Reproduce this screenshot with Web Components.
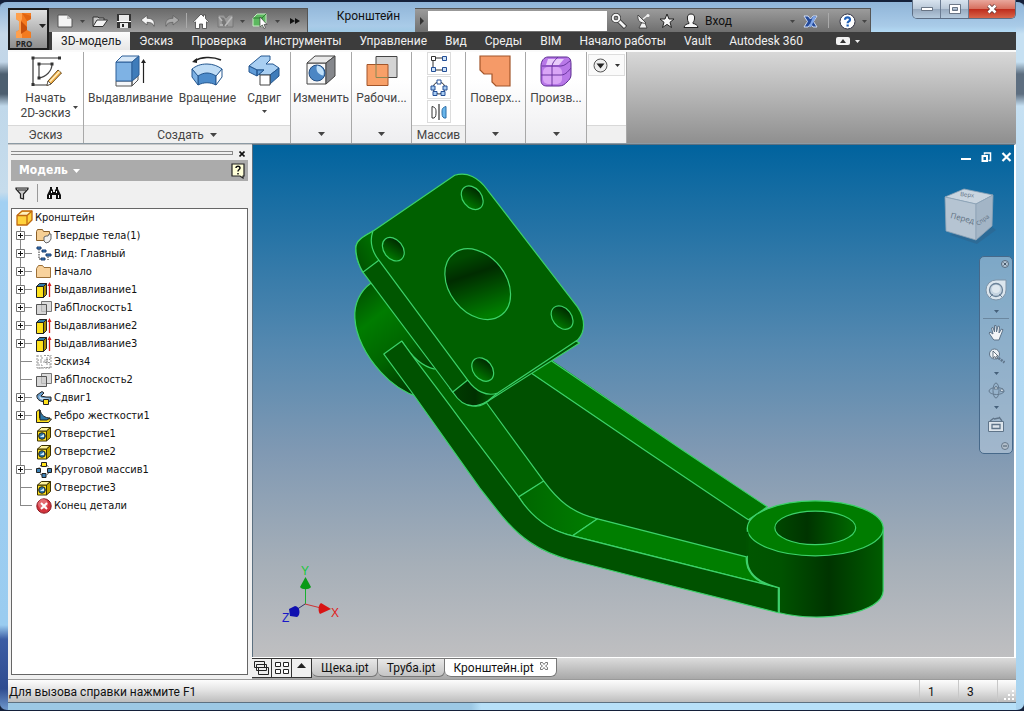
<!DOCTYPE html>
<html lang="ru">
<head>
<meta charset="utf-8">
<title>Кронштейн</title>
<style>
html,body{height:100%;margin:0}
body{font:12px/16px Roboto,"Noto Sans",sans-serif;color:#222;background:#14203a;overflow:hidden}
</style>
</head>
<body>
<cad-app></cad-app>
<script>
const define = (name, css, html, setup) => {
  const tpl = document.createElement('template');
  tpl.innerHTML = `<style>*{box-sizing:border-box}button{font:inherit;color:inherit;border:0;background:none;padding:0;margin:0}${css}</style>${html}`;
  customElements.define(name, class extends HTMLElement {
    connectedCallback() {
      if (this.shadowRoot) return;
      const root = this.attachShadow({mode: 'open'});
      root.append(tpl.content.cloneNode(true));
      if (setup) setup(this, root);
    }
  });
};

/* Icon set: [width, height, svg body] */
const cube = (f, t, s) => `<path fill="${f}" d="M1.500 5h9v10h-9z"/><path fill="${t}" d="M1.500 5l4-3.500h9l-4 3.500z"/><path fill="${s}" d="M10.500 5l4-3.500v10l-4 3.500z"/>`;
const I = {
  logo: [22, 27, `<path fill="#f47b20" d="M3 1h15v6l-4 2v9l4 2v6H3v-6l3-2V9L3 7z"/><path fill="#ffa04d" d="M3 1h6v6l-1 2v9l1 2v6H3v-6l3-2V9L3 7z"/><path fill="#c8500c" d="M8 9l6 6v3l-6 4z"/><path fill="#e06412" d="M9 1l9 3v3l-4 2z"/>`],
  caret: [7, 4, `<path fill="currentColor" d="M0 0h7L3.500 4z"/>`],
  caretS: [5, 3, `<path fill="currentColor" d="M0 0h5L2.500 3z"/>`],
  play: [4, 8, `<path fill="#333" d="M0 0v8l4-4z"/>`],
  ff: [10, 6, `<path fill="#111" d="M0 0l5 3-5 3zM5 0l5 3-5 3z"/>`],
  new: [16, 14, `<path fill="#f4f4f4" stroke="#555" d="M1 1h9l5 4v8H1z"/><path fill="#bbb" d="M10 1v4h5z"/>`],
  open: [16, 13, `<path fill="#c9c9c9" stroke="#333" d="M1 11V2h5l1 1h5v2"/><path fill="#f3f3f3" stroke="#333" d="M1 11.500L5 5h10.500L11 11.500z"/>`],
  save: [16, 16, `<path fill="#333" d="M1 1h14v14H1z"/><path fill="#e9e9e9" d="M3 2h10v6H3zM4 10h8v5H4z"/><path fill="#fff" d="M1 8h14v1H1z"/><path fill="#222" d="M6 11h2v3H6z"/>`],
  undo: [16, 12, `<path fill="#f5f5f5" stroke="#444" stroke-width=".6" d="M1 5l6-4.500v2.800c6 0 8 3 7 8-1-3-3-4-7-4v2.700z"/>`],
  redo: [16, 12, `<path fill="#aaa" stroke="#555" stroke-width=".6" d="M15 5L9 .5v2.800c-6 0-8 3-7 8 1-3 3-4 7-4v2.700z"/>`],
  home: [16, 16, `<path fill="#fff" stroke="#444" stroke-width=".8" d="M.8 8.500L8 1l2.500 2.500V2h2v3.500l2.800 3-1 1-.8-.7v6.700H9.500V11h-3v4.500h-4V8.800l-.7.700z"/>`],
  mat: [17, 14, `<path fill="#999" stroke="#777" d="M1 1h6l2 3 3-3h4v12H1z"/><path fill="#777" d="M3 3l4 1 4 8H6z"/><path fill="none" stroke="#bbb" stroke-width="1.500" d="M2 3l3 4M15 3L8 12M3 11h3"/>`],
  pick: [17, 16, `<path fill="#5cb85f" stroke="#c9f0c6" d="M1 5l4-4h9v9l-3 3H1z"/><path fill="none" stroke="#2f7d33" d="M1 5h9v8M10 5l4-4"/><path fill="#fff" stroke="#444" stroke-width=".7" d="M8 4v10l2.300-2 1.700 3.500 1.500-.7L12 11.500h3z"/>`],
  key: [16, 16, `<path fill="none" stroke="#333" stroke-width="4.500" d="M6 6l8.500 8.500"/><path fill="none" stroke="#f4f4f4" stroke-width="2.800" d="M6 6l8 8"/><circle cx="5" cy="5" r="3.300" fill="none" stroke="#333" stroke-width="3.400"/><circle cx="5" cy="5" r="3.300" fill="none" stroke="#f4f4f4" stroke-width="2"/>`],
  dish: [15, 16, `<path fill="#f2f2f2" stroke="#333" stroke-width=".8" d="M2 2c-1 6 3 9 8 8zM6 9l-3 6h8l-2-5"/><path stroke="#f2f2f2" stroke-width="1.500" d="M7 6l5-4"/><circle cx="12" cy="2.500" r="1.500" fill="#f2f2f2"/>`],
  star: [16, 16, `<path fill="#f8f8f8" stroke="#222" d="M8 1l2 5h5l-4 3.300 1.500 5.200L8 11.400l-4.500 3.100L5 9.300 1 6h5z"/>`],
  user: [16, 16, `<path fill="#f8f8f8" stroke="#222" d="M8 1c3 0 4 2 3.500 5-.3 2-1 3-1.500 3.500v1c2 .5 4.500 1 5 4H1c.5-3 3-3.500 5-4v-1C5 9 4.700 8 4.500 6 4 3 5 1 8 1z"/>`],
  exch: [15, 13, `<path fill="#244a9a" stroke="#cfdcf5" d="M1 1h4l2.500 3L10 1h4l-3.500 5.500L14 12h-4L7.500 9 5 12H1l3.500-5.500z"/><path fill="#7fa5e8" d="M10 1.500h3L8 12H6z"/>`],
  help: [17, 17, `<circle cx="8.500" cy="8.500" r="7.500" fill="#fff" stroke="#334"/><path fill="none" stroke="#1e5fb8" stroke-width="2.200" d="M6 6.700c0-3.200 5-3.200 5 0 0 1.800-2.400 1.700-2.400 3.600"/><path fill="#1e5fb8" d="M7.500 11.500h2.300v2H7.500z"/>`],
  min: [12, 4, `<path fill="#fff" stroke="#4e5a6c" stroke-width=".8" d="M.5.5h11v3H.5z"/>`],
  max: [12, 10, `<path fill="#fff" stroke="#4e5a6c" stroke-width=".8" fill-rule="evenodd" d="M.5.500h11v9H.5zM3.500 3.500v3h5v-3z"/>`],
  close: [12, 10, `<path stroke="#5a3230" stroke-width="4" d="M2.500 1.500l7 7M9.500 1.500l-7 7"/><path stroke="#fff" stroke-width="2.600" d="M2.500 1.500l7 7M9.500 1.500l-7 7"/>`],
  collapse: [14, 8, `<rect width="14" height="8" rx="2" fill="#f2f2f2"/><path fill="#333" d="M4 6l3-4 3 4z"/>`],
  sketch: [32, 32, `<path fill="none" stroke="#333" stroke-width="1.200" d="M3 3h27M3 3v27h14"/><path fill="none" stroke="#444" stroke-width="1.200" d="M9 9h13c0 7-6 13-13 14z"/><path fill="#333" d="M1.500 1.500h3v3h-3zM28 1.500h3v3h-3zM1.500 28h3v3h-3zM7.500 7.500h3v3h-3zM20.500 7.500h3v3h-3zM7.500 21.500h3v3h-3z"/><path fill="#f6b24a" stroke="#5a3d10" stroke-width=".9" d="M18 26L28 15l3.500 3L21 29l-4 1.500z"/><path stroke="#fff3c8" stroke-width="1.300" d="M20 26.500L29.500 16.500"/><path fill="#fff" stroke="#444" stroke-width=".7" d="M18 26l3 3-4 1.500z"/>`],
  extrude: [32, 32, `<path fill="#f5f7fa" stroke="#555" d="M2 26h16v5H2zM18 31l6-6v-4l-6 5z"/><path fill="#7eb2e4" stroke="#2d5f98" d="M2 7h16v19H2z"/><path fill="#d7e8f8" stroke="#2d5f98" d="M2 7l6-6h17l-7 6z"/><path fill="#3f7cba" stroke="#2d5f98" d="M18 7l7-6v19l-7 6z"/><path stroke="#222" stroke-width="1.200" d="M29.500 6v22"/><path fill="#222" d="M27 8l2.500-4L32 8z"/>`],
  revolve: [32, 32, `<path fill="none" stroke="#222" stroke-width="1.500" d="M3 6c7-4 18-5 27-1"/><path fill="#222" d="M1 7l5-4v5z"/><path fill="#bfdcf5" stroke="#24578f" d="M1 14c4-3 8-5 15-5 6 0 11 2 15 5l-6 8c-6-4-12-4-18 0z"/><path fill="#4d8ccb" stroke="#24578f" d="M7 21c6-4 12-4 18 0v9c-6-3-12-3-18 0z"/><path fill="#7eb2e4" stroke="#24578f" d="M1 14l6 7v9l-6-8z"/><path fill="#fff" stroke="#24578f" d="M31 14l-6 7v9l6-8z"/>`],
  sweep: [32, 32, `<path fill="#a9cff2" stroke="#24578f" d="M1 11L13 1h9v4l-4 4h7l6 4-9 7H12l-1-1 5-4H9z"/><path fill="#5f9bd8" stroke="#24578f" d="M1 11l8 4v6l-8-4zM9 15h7l-7 6z"/><path fill="#3f7cba" stroke="#24578f" d="M22 20l9-7v8l-9 8z"/><path fill="#fff" stroke="#444" d="M12 20h10v10H12z"/>`],
  modify: [30, 31, `<path fill="#f7f7f7" stroke="#444" d="M1 8h19v21H1z"/><path fill="#e9e9e9" stroke="#444" d="M1 8l8-7h20l-9 7z"/><path fill="#85878c" stroke="#444" d="M20 8l9-7v20l-9 8z"/><circle cx="11" cy="18" r="8" fill="#4b86c4" stroke="#234d80"/><path fill="#bfe0fa" d="M11 10.500a7.500 7.500 0 0 1 6.500 10C13 20 9 16 11 10.500z"/>`],
  work: [32, 31, `<path fill="#d4d4d4" stroke="#444" d="M10 1.500h21v21H10z"/><path fill="#f8a068" stroke="#a2552a" d="M1 9.500h21v21H1z"/><path fill="none" stroke="#885" d="M10 9v13.500h12"/>`],
  surf: [32, 32, `<path fill="#f59a68" stroke="#a2552a" stroke-width="1.200" d="M1 1h30v30H17l-4-4v-8H5l-4-4z"/>`],
  form: [32, 32, `<path fill="#b878e8" stroke="#5a2a90" d="M8 2h18c4 0 5 3 5 7v11c0 3-2 5-4 7s-4 4-8 4H7c-4 0-6-2-6-6V11c0-5 3-9 7-9z"/><rect x="3" y="12" width="19" height="17" rx="5" fill="#d9a5f6"/><path fill="#e8ccfa" d="M8 4h16l-5 6H6z"/><path fill="none" stroke="#6a35a0" d="M1 20h20c5 0 8-5 10-7M12 31V12c0-4 3-7 6-10M2 11h19c4 0 7-4 9-5"/>`],
  rect: [18, 18, `<path stroke="#333" fill="none" d="M3 3v12M3 3h12M3 15h12"/><g fill="#cfe3f8" stroke="#244f96"><path d="M12.500 1.500h4v4h-4zM1.500 12.500h4v4h-4zM12.500 12.500h4v4h-4z"/><path fill="#fff" stroke="#333" d="M1.500 1.500h4v4h-4z"/></g>`],
  circ: [18, 18, `<circle cx="9" cy="9" r="6" fill="none" stroke="#333"/><g fill="#a9cdf2" stroke="#244f96"><path fill="#fff" d="M7 1h4v4H7z"/><path d="M1 7h4v4H1zM13 7h4v4h-4zM3 12.500h4v4H3zM11 12.500h4v4h-4z"/></g>`],
  mirror: [18, 18, `<path fill="#fff" stroke="#333" d="M2 3.500c4 1 4 3 4 5.500s0 5-2 6H2z"/><path fill="#69b5ea" stroke="#2b6ea8" d="M16 3.500c-4 1-4 3-4 5.500s0 5 2 6h2z"/><path stroke="#333" stroke-width="1.200" d="M9 1v16"/>`],
  dd: [15, 15, `<circle cx="7.500" cy="7.500" r="6.500" fill="#eee" stroke="#555"/><path fill="#222" d="M3.500 5.500h8l-4 5z"/>`],
  helpSq: [14, 16, `<path fill="#ffffd8" stroke="#222" stroke-width="1.200" d="M1 1h12v12h-1v2l-3-2H1z"/><path fill="none" stroke="#111" stroke-width="1.500" d="M5 5c0-2.500 4-2.500 4 0 0 1.500-2 1.500-2 3.500M7 10v1.500"/>`],
  filter: [14, 13, `<path fill="#ccc" stroke="#222" stroke-width="1.200" d="M1 1h12v1L8.500 7v5l-3-1V7L1 2z"/><path stroke="#222" d="M3 3h8"/>`],
  find: [16, 14, `<path fill="#111" d="M4 1h2v2l1 1v2h2V4l1-1V1h2v2l3 6v4h-5V9H6v4H1V9l3-6z"/><path stroke="#fff" d="M3.500 9v3M12.500 9v3M5.500 5v2M10.500 5v2"/>`],
  x: [6, 6, `<path stroke="#111" stroke-width="1.600" d="M.5.5l5 5M5.500.500l-5 5"/>`],
  part: [17, 16, `<path fill="#ffd23c" stroke="#c06a10" stroke-width="1.300" stroke-linejoin="round" d="M1 5.500l5-4.500h10v9l-5 5H1z"/><path fill="#fff2c0" d="M2 5.500L6.500 2H15l-4 3.500z"/><path fill="none" stroke="#c06a10" stroke-width="1.300" d="M1 5.500h10V15M11 5.500L16 1"/>`],
  bodies: [16, 16, `<path fill="#f6cf94" stroke="#8a5f28" d="M.5 3.500l1-2h5l1 2h6v9H.5z"/><path fill="#f0f0f0" stroke="#666" d="M8 9l2-1h2l1-2h2v5l-2 3-3 1-2-2z"/>`],
  view: [16, 16, `<path fill="none" stroke="#2b2b2b" stroke-dasharray="1.500 1" d="M3 3v10h4M7 5h3M12 8v6"/><g fill="#3f84c8" stroke="#16386a"><path d="M1 1h4v2H1zM6 4h4v2H6zM5 12h4v2H5zM10 8h5v2h-5z"/></g>`],
  folder: [16, 16, `<path fill="#f8d29c" stroke="#9c7038" d="M.5 4.500l2-3h4l1.500 2h6.500v10H.5z"/>`],
  ext: [16, 16, `<g stroke="#222"><path fill="#ffe21c" d="M.5 4.500h7v11h-7z"/><path fill="#2d78a8" d="M.5 4.500l3-3h7l-3 3z"/><path fill="#a58e00" d="M7.500 4.500l3-3v11l-3 3z"/></g><path stroke="#d82020" stroke-width="1.300" d="M13.500 2v13"/><path fill="#d82020" d="M11.500 4l2-4 2 4z"/>`],
  plane: [16, 16, `<path fill="#ddd" stroke="#777" d="M5.500 1.500h10v10h-10z"/><path fill="#c9c9c9" fill-opacity=".75" stroke="#555" d="M.5 4.500h10v10H.5z"/>`],
  sk4: [16, 16, `<path fill="none" stroke="#999" stroke-dasharray="2 1" d="M1 2h5v4H2v5h4v3H1M8 1.500h6v4H9v3h5v5H8M11 3v9M4 8h8M1 1v13h14V1"/>`],
  swp: [16, 16, `<path fill="#6a9ecb" stroke="#222" d="M1 5l5-3.500L8 3 5 6l5 1h5v4l-5 1C4 12 0 9 1 5z"/><path fill="#cfe3f5" d="M3 6l3 2 6 .5 2 .5-4 1.500L4 9z"/><path fill="#ffe21c" stroke="#222" d="M7.500 9.500h5v5h-5z"/>`],
  rib: [16, 16, `<path fill="#ffe21c" stroke="#222" d="M.5 3.500l3-2V10l12 1-3 3.500H.5z"/><path fill="#2d78a8" stroke="#222" d="M4 2c1 5 5 8 10 8l-3 2H4z"/>`],
  hole: [16, 16, `<g stroke="#3b3000">${cube('#ffe21c','#fff39a','#c0a400')}</g><circle cx="6" cy="10" r="3.300" fill="#2d78a8" stroke="#222"/><path fill="#d6ecfa" d="M4 11l4-3v3z"/>`],
  pat: [16, 16, `<circle cx="8" cy="8" r="5.500" fill="none" stroke="#222" stroke-dasharray="2 1.500"/><g stroke="#222" fill="#3f84b8"><path fill="#ffe21c" d="M5.500.5h5v4h-5z"/><path d="M.5 6.500h4v4h-4zM11.500 6.500h4v4h-4zM6 11.500h4v4H6z"/></g>`],
  end: [16, 16, `<circle cx="8" cy="8" r="7.200" fill="#d2333c" stroke="#8a1a22"/><circle cx="7" cy="6" r="5" fill="#ee8d92" opacity=".6"/><path stroke="#fff" stroke-width="2" d="M5 5l6 6M11 5l-6 6"/>`],
  vmin: [11, 10, `<path fill="#fff" d="M0 6h10v2H0z"/>`],
  vres: [11, 10, `<path fill="none" stroke="#fff" stroke-width="1.500" d="M3.500 2.500V1h6v7.500H7.500"/><path fill="none" stroke="#fff" stroke-width="2" d="M1.500 4h4.500v5H1.500z"/>`],
  vx: [11, 10, `<path stroke="#fff" stroke-width="2.200" d="M1.500 1l8 8M9.500 1l-8 8"/>`],
  nx: [8, 8, `<circle cx="4" cy="4" r="3.500" fill="#b4c6d6" stroke="#55697c"/><path stroke="#45586a" d="M2.500 2.500l3 3M5.500 2.500l-3 3"/>`],
  nm: [8, 8, `<circle cx="4" cy="4" r="3.500" fill="#b4c0cc" stroke="#66788a"/><path stroke="#45586a" d="M2 4h4"/>`],
  wheel: [22, 22, `<path fill="#dce6ee" stroke="#7f95a9" d="M11 1h10v10a10 10 0 1 1-10-10z"/><circle cx="11" cy="11" r="6.500" fill="#c5d4e1" stroke="#6b8298" stroke-width="1.300"/><path fill="none" stroke="#6b8298" d="M5 18l3-3M17 18l-3-3"/><circle cx="11" cy="10" r="4" fill="#dfe8ef"/>`],
  hand: [16, 17, `<path fill="#f2f5f8" stroke="#5f7489" d="M5 15L1 9l1-1 3 2-1.500-6 1.500-.5L6.500 8V1.500H8L8.500 8 10 2l1.500.5L11 9l2.500-4 1.500.7L12.500 12 11 16H6z"/>`],
  zoom: [17, 16, `<circle cx="6.500" cy="6" r="5" fill="#e8eef3" stroke="#5f7489"/><path fill="#fff" stroke="#3d5062" stroke-width=".8" d="M5 3v7l2-1.500L8.500 11l1-.5L8.500 8H10z"/><path stroke="#5f7489" stroke-width="2.500" stroke-dasharray="2 1" d="M10.500 10l6 4.500"/>`],
  orbit: [17, 17, `<g fill="none" stroke="#647a8f"><ellipse cx="8.500" cy="9" rx="7.500" ry="3.500"/><ellipse cx="8" cy="8.500" rx="3" ry="7.500"/></g><path fill="#e6edf2" stroke="#647a8f" d="M8 4l2 3H6zM14 6l2 4-4-1z"/>`],
  look: [16, 16, `<path fill="#dde5ec" stroke="#5f7489" d="M.5 5.500h15v10H.5z"/><path fill="none" stroke="#5f7489" stroke-width="1.300" d="M4 8.500h8v4H4zM2 5l4-3M6 3l5-1M14 5l-3-4"/>`],
  casc: [17, 16, `<g fill="#eee" stroke="#222"><path d="M1.500 1.500h10v6h-10zM3.500 4.500h10v6h-10zM5.500 7.500h10v7h-10z"/></g>`],
  tile: [16, 14, `<g fill="#fff" stroke="#222"><path d="M1.500 1.500h5v4h-5zM9.500 1.500h5v4h-5zM1.500 8.500h5v4h-5zM9.500 8.500h5v4h-5z"/></g>`],
  up: [9, 5, `<path fill="#222" d="M0 5h9L4.500 0z"/>`],
  tabx: [8, 8, `<path fill="#fff" stroke="#555" stroke-width=".8" d="M.5.5h2L4 2.500 5.500.5h2v2L5.500 4l2 1.500v2h-2L4 5.500 2.500 7.500h-2v-2L2.500 4l-2-1.500z"/>`],
  grip: [10, 10, `<g fill="#fff"><path d="M8 0h2v2H8zM4 4h2v2H4zM8 4h2v2H8zM0 8h2v2H0zM4 8h2v2H4zM8 8h2v2H8z"/></g>`]
};
define('ui-icon', ':host{display:inline-flex;flex:none}svg{display:block}', '', (el, root) => {
  const [w, h, body] = I[el.getAttribute('name')];
  root.innerHTML += `<svg width="${w}" height="${h}" viewBox="0 0 ${w} ${h}" fill="none" aria-hidden="true">${body}</svg>`;
});

/* Icon button used in the title strip */
define('tool-button', `:host{display:flex;width:24px;height:24px}:host([narrow]){width:11px}button{flex:1;display:flex;align-items:center;justify-content:center;color:#444}`,
  '<button><slot></slot></button>', (el, root) => {
    root.querySelector('button').setAttribute('aria-label', el.getAttribute('label') || 'Меню');
    el.innerHTML = `<ui-icon name="${el.getAttribute('icon')}"></ui-icon>`;
  });

define('title-strip', `
:host{display:flex;height:32px;align-items:flex-end;min-width:0}
.qat,.info{display:flex;height:24px;border-top:1px solid #555;border-right:1px solid #555}
.qat{flex:none;padding-left:4px;background:linear-gradient(#6a6a6a,#7d7d7d 40%,#a0a0a0)}
.info{flex:0 1 456px;min-width:0;background:linear-gradient(#9b9b9b,#6f6f6f)}
i{width:1px;margin:4px 2px;background:#aaa}
.info i{margin:4px 6px}
h1{flex:none;width:107px;margin:0;font-size:12px;line-height:32px;height:32px;font-weight:400;text-align:center;padding-left:14px;color:#111}
.arrow{width:13px;display:flex;align-items:center;justify-content:center}
input{flex:1;min-width:40px;margin:2px 0 1px;border:0;background:#fff;padding:0 4px;font:inherit}
.sign{width:84px;text-align:left;line-height:24px;color:#111;padding-left:2px}
.win{display:flex;align-self:flex-start;margin-left:auto;height:19px;border:1px solid #5d6e84;border-top:0;border-radius:0 0 5px 5px;overflow:hidden}
.win button{width:28px;display:flex;align-items:center;justify-content:center;background:linear-gradient(#d9e4ef,#b9c8d8 48%,#98aabf 52%,#b5cadd);border-right:1px solid #6b7c92}
.win button.x{width:46px;border:0;background:linear-gradient(#e9a79c,#d7705f 48%,#bf2d1d 52%,#d8654a)}
`, `
<div class="qat">
<tool-button icon="new" label="Создать"></tool-button><tool-button icon="caretS" narrow></tool-button>
<tool-button icon="open" label="Открыть"></tool-button><tool-button icon="save" label="Сохранить"></tool-button>
<tool-button icon="undo" label="Отменить"></tool-button><tool-button icon="redo" label="Повторить"></tool-button><i></i>
<tool-button icon="home" label="Домой"></tool-button><tool-button icon="mat" label="Материал"></tool-button><tool-button icon="caretS" narrow></tool-button>
<tool-button icon="pick" label="Выбор"></tool-button><tool-button icon="caretS" narrow></tool-button><tool-button icon="ff" label="Ещё"></tool-button>
</div>
<h1>Кронштейн</h1>
<div class="info">
<button class="arrow" aria-label="Свернуть поиск"><ui-icon name="play"></ui-icon></button>
<input type="text" aria-label="Поиск">
<tool-button icon="key" label="Поиск"></tool-button><tool-button icon="dish" label="Центр связи"></tool-button>
<tool-button icon="star" label="Избранное"></tool-button><tool-button icon="user" label="Учётная запись"></tool-button>
<button class="sign">Вход</button><tool-button icon="caretS" narrow></tool-button>
<tool-button icon="exch" label="Exchange"></tool-button><i></i>
<tool-button icon="help" label="Справка"></tool-button><tool-button icon="caretS" narrow></tool-button>
</div>
<div class="win"><button aria-label="Свернуть"><ui-icon name="min"></ui-icon></button><button aria-label="Развернуть"><ui-icon name="max"></ui-icon></button><button class="x" aria-label="Закрыть"><ui-icon name="close"></ui-icon></button></div>`);

define('ribbon-tabs', `
:host{display:block;background:#3c3c3c}
nav{display:flex;height:18px;padding-left:3px;color:#f0f0f0}
button{padding:0 9px;line-height:18px;white-space:nowrap}
.on{background:linear-gradient(#fdfdfd,#e6e6e6);color:#222}
.mini{display:flex;align-items:center;gap:5px;margin-left:15px}
`, `<nav>${['3D-модель','Эскиз','Проверка','Инструменты','Управление','Вид','Среды','BIM','Начало работы','Vault','Autodesk 360'].map((t, i) => `<button${i ? '' : ' class="on"'}>${t}</button>`).join('')}
<button class="mini" aria-label="Свернуть ленту"><ui-icon name="collapse"></ui-icon><ui-icon name="caretS"></ui-icon></button></nav>`);

/* Ribbon: a panel with an optional footer, and its large buttons */
define('ribbon-panel', `
:host{display:flex;flex-direction:column;flex:none;background:#fff;border-right:1px solid #a8a8a8}
:host([folded]){background:linear-gradient(#fff 30%,#eeeef0)}
.body{flex:1;display:flex;justify-content:center}
footer{height:18px;display:flex;align-items:center;justify-content:center;gap:6px;color:#444;white-space:nowrap}
:host(:not([folded])) footer{background:#f0f0f0;border-top:1px solid #d8d8d8}
`, `<div class="body"><slot></slot></div><footer><slot name="foot"></slot></footer>`, (el) => { el.style.width = el.getAttribute('w') + 'px'; });

define('ribbon-button', `
:host{display:flex;position:relative}
button{display:flex;flex-direction:column;align-items:center;padding:3px 3px 0;color:#444;line-height:15px;text-align:center;white-space:pre-line}
.ic{height:36px;display:flex;align-items:flex-start}
.c{margin-top:4px;display:flex}
:host([side]) .c{position:absolute;right:-4px;top:50px}
`, `<button><span class="ic"></span><slot></slot><span class="c"></span></button>`, (el, root) => {
  root.querySelector('.ic').innerHTML = `<ui-icon name="${el.getAttribute('icon')}"></ui-icon>`;
  if (el.hasAttribute('menu')) root.querySelector('.c').innerHTML = '<ui-icon name="caretS"></ui-icon>';
});

define('cad-ribbon', `
:host{display:flex;height:94px;background:linear-gradient(#d8d8d8,#8f8f8f);border-top:2px solid #fafafa;border-bottom:1px solid #8c9aa4}
.col{display:flex;flex-direction:column;align-items:center;gap:1px}
.col button{width:24px;height:23px;display:flex;align-items:center;justify-content:center;border:1px solid #dcdcdc;background:#fff}
.dd{display:flex;align-items:center;gap:7px;height:22px;margin-top:2px;padding:0 4px;border:1px solid #ddd;align-self:flex-start;background:#fafafa;color:#333}
.wide{padding:0 5px}
`, `
<ribbon-panel w="76"><ribbon-button icon="sketch" menu side>Начать
2D-эскиз</ribbon-button><span slot="foot">Эскиз</span></ribbon-panel>
<ribbon-panel w="207"><ribbon-button icon="extrude">Выдавливание</ribbon-button><ribbon-button icon="revolve">Вращение</ribbon-button><ribbon-button class="wide" icon="sweep" menu>Сдвиг</ribbon-button><span slot="foot">Создать</span><ui-icon slot="foot" name="caret"></ui-icon></ribbon-panel>
<ribbon-panel w="61" folded><ribbon-button icon="modify">Изменить</ribbon-button><ui-icon slot="foot" name="caret"></ui-icon></ribbon-panel>
<ribbon-panel w="60" folded><ribbon-button icon="work">Рабочи...</ribbon-button><ui-icon slot="foot" name="caret"></ui-icon></ribbon-panel>
<ribbon-panel w="54"><div class="col"><button aria-label="Прямоугольный массив"><ui-icon name="rect"></ui-icon></button><button aria-label="Круговой массив"><ui-icon name="circ"></ui-icon></button><button aria-label="Зеркальное отражение"><ui-icon name="mirror"></ui-icon></button></div><span slot="foot">Массив</span></ribbon-panel>
<ribbon-panel w="60" folded><ribbon-button icon="surf">Поверх...</ribbon-button><ui-icon slot="foot" name="caret"></ui-icon></ribbon-panel>
<ribbon-panel w="61" folded><ribbon-button icon="form">Произв...</ribbon-button><ui-icon slot="foot" name="caret"></ui-icon></ribbon-panel>
<ribbon-panel w="40"><button class="dd" aria-label="Преобразовать"><ui-icon name="dd"></ui-icon><ui-icon name="caretS"></ui-icon></button></ribbon-panel>`);

/* Browser tree row: branch lines, feature icon, caption */
define('tree-item', `
:host{display:flex;height:18px;align-items:center;white-space:nowrap;gap:2px}
:host([root]){padding-left:4px}
svg{display:block;flex:none;margin-right:-1px}
`, `<slot></slot>`, (el, root) => {
  const line = el.hasAttribute('last') ? 9 : 18;
  const branch = el.hasAttribute('root') ? '' : `<svg width="23" height="18" fill="none" aria-hidden="true"><path stroke="#888" d="M8.500 0V${line}M8 8.500h12"/>${el.hasAttribute('more') ? '<path fill="#fff" stroke="#777" d="M4.500 4.500h8v8h-8z"/><path stroke="#111" d="M6 8.500h5M8.500 6v5"/>' : ''}</svg>`;
  root.querySelector('slot').insertAdjacentHTML('beforebegin', `${branch}<ui-icon name="${el.getAttribute('icon')}"></ui-icon>`);
});

define('model-browser', `
:host{display:flex;flex-direction:column;background:#f0f0f0;padding:1px 4px 4px 3px;border-top:1px solid #c8c8c8}
.grab{display:flex;align-items:center;height:14px;gap:6px;padding-right:3px}
.grab i{flex:1;height:4px;border:1px solid #8a8a8a;border-left:0}
header{display:flex;align-items:center;height:21px;background:#ababab;color:#fff;font:bold 12px/21px "DejaVu Sans Condensed","DejaVu Sans",sans-serif;padding:0 3px 0 8px;gap:5px}
header ui-icon:last-child{margin-left:auto}
.bar{display:flex;align-items:center;height:27px;padding:0 4px 3px;gap:8px}
.bar i{width:1px;height:18px;background:#999}
.bar button{display:flex}
.tree{flex:1;min-height:0;background:#fff;border:1px solid #666;font:11px/18px "DejaVu Sans Condensed","DejaVu Sans",sans-serif;color:#111}
`, `
<div class="grab"><i></i><button aria-label="Закрыть"><ui-icon name="x"></ui-icon></button></div>
<header>Модель<ui-icon name="caret"></ui-icon><ui-icon name="helpSq"></ui-icon></header>
<div class="bar"><button aria-label="Фильтр"><ui-icon name="filter"></ui-icon></button><i></i><button aria-label="Найти"><ui-icon name="find"></ui-icon></button></div>
<div class="tree">
<tree-item root icon="part">Кронштейн</tree-item>
<tree-item more icon="bodies">Твердые тела(1)</tree-item>
<tree-item more icon="view">Вид: Главный</tree-item>
<tree-item more icon="folder">Начало</tree-item>
<tree-item more icon="ext">Выдавливание1</tree-item>
<tree-item more icon="plane">РабПлоскость1</tree-item>
<tree-item more icon="ext">Выдавливание2</tree-item>
<tree-item more icon="ext">Выдавливание3</tree-item>
<tree-item icon="sk4">Эскиз4</tree-item>
<tree-item icon="plane">РабПлоскость2</tree-item>
<tree-item more icon="swp">Сдвиг1</tree-item>
<tree-item more icon="rib">Ребро жесткости1</tree-item>
<tree-item icon="hole">Отверстие1</tree-item>
<tree-item icon="hole">Отверстие2</tree-item>
<tree-item more icon="pat">Круговой массив1</tree-item>
<tree-item icon="hole">Отверстие3</tree-item>
<tree-item last icon="end">Конец детали</tree-item>
</div>`);

define('nav-bar', `
:host{display:flex;flex-direction:column;align-items:center;width:34px;height:198px;padding:3px 0;border:1px solid #47698a;border-radius:5px;background:rgba(190,208,224,.55);color:#45607a}
button{display:flex;justify-content:center;align-items:center;width:100%;height:24px}
.t{height:8px;justify-content:flex-end;padding-right:3px}
.w{height:34px;margin-top:5px}
.m{height:10px}
.w+.m{height:8px}
hr{width:26px;height:1px;border:0;margin:3px 0 1px;background:#6b879f}
.end{margin-top:6px}
`, `
<button class="t" aria-label="Закрыть"><ui-icon name="nx"></ui-icon></button>
<button class="w" aria-label="Штурвал"><ui-icon name="wheel"></ui-icon></button><button class="m" aria-label="Меню"><ui-icon name="caretS"></ui-icon></button>
<hr>
<button aria-label="Панорама"><ui-icon name="hand"></ui-icon></button>
<button aria-label="Зум"><ui-icon name="zoom"></ui-icon></button><button class="m" aria-label="Меню"><ui-icon name="caretS"></ui-icon></button>
<button aria-label="Орбита"><ui-icon name="orbit"></ui-icon></button><button class="m" aria-label="Меню"><ui-icon name="caretS"></ui-icon></button>
<button aria-label="Вид на грань"><ui-icon name="look"></ui-icon></button>
<button class="t end" aria-label="Параметры"><ui-icon name="nm"></ui-icon></button>`);

define('model-view', `
:host{display:block;position:relative;overflow:hidden;border:1px solid #5c7080;border-width:1px 0 0 1px;background:linear-gradient(#00639e,#0e69a1 6%,#5689b0 40%,#8099b3 60%,#a6afb8 82%,#bfbfc1)}
.part{position:absolute;inset:0;width:100%;height:100%}
.triad{position:absolute;left:27px;bottom:28px}
.cube{position:absolute;right:16px;top:40px}
.mdi{position:absolute;right:2px;top:7px;display:flex;gap:9px}
.mdi button{display:flex}
nav-bar{position:absolute;right:1px;top:111px}
`, `
<svg class="part" viewBox="253 145 762 512" aria-hidden="true">
<defs>
<linearGradient id="boss" x1="0" y1="0" x2=".7" y2="1"><stop offset="0" stop-color="#004800"/><stop offset=".3" stop-color="#007c00"/><stop offset=".6" stop-color="#006400"/><stop offset="1" stop-color="#002c00"/></linearGradient>
<linearGradient id="bore" x1=".2" y1=".2" x2=".6" y2="1"><stop offset="0" stop-color="#003000"/><stop offset="1" stop-color="#007800"/></linearGradient>
<linearGradient id="boreBig" gradientUnits="userSpaceOnUse" x1="466" y1="256" x2="486" y2="316" gradientTransform="rotate(-52 478 284)"><stop offset="0" stop-color="#004a00"/><stop offset=".3" stop-color="#002c00"/><stop offset="1" stop-color="#007c00"/></linearGradient>
<linearGradient id="eye" x1="0" x2="1"><stop offset="0" stop-color="#005600"/><stop offset=".25" stop-color="#005200"/><stop offset=".6" stop-color="#003400"/><stop offset="1" stop-color="#005c00"/></linearGradient>
<linearGradient id="eyeIn" x1="0" x2="1"><stop offset="0" stop-color="#004800"/><stop offset=".4" stop-color="#003400"/><stop offset="1" stop-color="#006a00"/></linearGradient>
<linearGradient id="crn" x1="0" x2="1" y1="1" y2="0"><stop offset="0" stop-color="#004c00"/><stop offset="1" stop-color="#007a00"/></linearGradient>
<linearGradient id="crn2" x1="0" x2="1"><stop offset="0" stop-color="#003c00"/><stop offset=".5" stop-color="#003000"/><stop offset="1" stop-color="#006400"/></linearGradient>
<linearGradient id="bend" x1="0" x2="1"><stop offset="0" stop-color="#006600"/><stop offset="1" stop-color="#007e00"/></linearGradient>
</defs>
<g stroke="#3cd26a" stroke-width="1.200" stroke-linejoin="round">
<path fill="url(#boss)" d="M371 283C360 291 354 304 355 318c1 18 11 38 26 54 10 11 24 21 38 25l36-10-55-90z"/>
<path fill="#005000" stroke="none" d="M486 403l44-31 220 148-2 38-150-39c-26-6-40-19-54-38z"/>
<path fill="#007600" stroke="none" d="M530 372l22-12 131 90 85 57-19 13-104-70z"/>
<path fill="none" d="M552 361l131 89 85 57-19 13-104-70-115-78"/>
<path fill="#006200" stroke="none" d="M402 341c10 14 20 26 33 28l18 24 34 10 57 78-25 16-56-74z"/>
<path fill="none" d="M402 341c8 13 18 25 33 28M487 403l57 78"/>
<path fill="url(#bend)" d="M519 497l25-16c14 19 28 32 54 38l-25 17c-23-5-42-19-54-39z"/>
<path fill="#007e00" d="M573 536l25-17 149 38c-1 11 5 26 32 31z"/>
<path fill="#005200" d="M384 354l18-13c20 28 41 54 61 82l56 74c13 20 31 34 54 39l67 17 139 35v25l-139-35-70-18c-33-9-51-24-67-43-10-12-16-20-23-29l-66-93z"/>
<path fill="url(#eye)" d="M748 528v29c-1 13 6 25 32 31v25c44 11 104 0 104-22v-63z"/>
<ellipse cx="816" cy="528.500" rx="68" ry="27.500" fill="#007c00"/>
<ellipse cx="816" cy="528" rx="40.500" ry="16.800" fill="url(#eyeIn)"/>
<path stroke="none" fill="#005200" d="M746 532h3v24h-3z"/>
<path fill="#005600" d="M373 231c-9 5-17 9-17 17 0 9 3 17 7 24l90 120c6 8 15 15 25 14 5 0 8-3 12-6l90-57z"/>
<path fill="url(#crn)" d="M373 231c-9 5-17 9-17 17 0 9 3 17 7 24l16-12z"/>
<path fill="url(#crn2)" d="M453 392l15-12c7 8 17 15 30 13l-10 8c-13 8-25 7-35-9z"/>
<path fill="#006000" d="M373 231l82-56c12-4 24 2 33 15l90 117c8 12 8 25 0 33l-80 53c-11 4-22-2-30-13l-89-120c-8-10-9-20-6-29z"/>
<g fill="url(#bore)"><ellipse cx="478" cy="284" rx="39" ry="28.500" transform="rotate(52 478 284)" fill="url(#boreBig)"/>
<ellipse cx="472.500" cy="197.500" rx="13" ry="9.500" transform="rotate(52 472.500 197.500)"/>
<ellipse cx="393.500" cy="249" rx="13" ry="9.500" transform="rotate(52 393.500 249)"/>
<ellipse cx="562.500" cy="317.500" rx="13" ry="9.500" transform="rotate(52 562.500 317.500)"/>
<ellipse cx="483" cy="369.500" rx="13" ry="9.500" transform="rotate(52 483 369.500)"/></g>
</g></svg>
<svg class="triad" width="62" height="64" viewBox="280 564 62 64" font-family="Liberation Sans" font-size="12">
<path stroke="#18b030" d="M305.500 603v-18"/><path stroke="#c33" d="M305 603l16 4"/><path stroke="#336" d="M305 603l-9 6"/>
<path fill="#0a9a18" d="M305.500 576l5.500 10c-2 3-9 3-11 0z"/><path fill="#d81414" d="M331 608l-10-6c-3 2-3 9-1 11z"/><path fill="#1010b0" d="M289 608l6-3c5 0 6 9 2 11l-7-1z"/>
<text x="301" y="574" fill="#18c838">Y</text><text x="331" y="616" fill="#e02020">X</text><text x="282" y="621" fill="#1818c8">Z</text></svg>
<svg class="cube" width="56" height="60" viewBox="942 186 56 60" font-family="Open Sans" font-size="8" fill="#5f7183">
<path fill="#33597c" opacity=".35" d="M950 236l27 9 19-14-10-8z"/>
<g stroke="#8da2b5" stroke-width=".8"><path fill="#c9d5e0" d="M945 198l19-8 29 6-17 9z"/><path fill="#b5c4d2" d="M945 198l31 7v36l-30-9z"/><path fill="#a3b5c6" d="M976 205l17-9-1 31-16 14z"/></g>
<text x="950" y="219" transform="rotate(14 950 219)">Перед</text><text x="978" y="227" font-size="6" transform="rotate(-36 978 227)">Спра</text><text x="960" y="197" font-size="6" transform="rotate(6 960 197)">Верх</text></svg>
<div class="mdi"><button aria-label="Свернуть"><ui-icon name="vmin"></ui-icon></button><button aria-label="Восстановить"><ui-icon name="vres"></ui-icon></button><button aria-label="Закрыть"><ui-icon name="vx"></ui-icon></button></div>
<nav-bar></nav-bar>`);

define('doc-tabs', `
:host{display:flex;height:22px;background:linear-gradient(#dcdcdc,#a8a8a8);border-top:1px solid #fff}
button{line-height:19px}
.sq{width:20px;display:flex;align-items:center;justify-content:center;background:#f0f0f0;border:1px solid #333;border-left-width:0;height:20px}
.sq:first-child{border-left-width:1px}
.sq.up{padding-bottom:6px}
.tab{height:19px;padding:0 8px 0 9px;background:linear-gradient(#e8e8e8,#c4c4c4);border:1px solid #777;border-left-width:0;border-radius:0 0 6px 6px;color:#111}
.on{background:#fff;display:flex;gap:6px}
.on ui-icon{margin-top:3px}
`, `<button class="sq" aria-label="Каскадом"><ui-icon name="casc"></ui-icon></button><button class="sq" aria-label="Мозаикой"><ui-icon name="tile"></ui-icon></button><button class="sq up" aria-label="Список"><ui-icon name="up"></ui-icon></button>
<button class="tab">Щека.ipt</button><button class="tab">Труба.ipt</button><button class="tab on">Кронштейн.ipt<ui-icon name="tabx"></ui-icon></button>`);

define('status-bar', `
:host{display:flex;height:24px;line-height:25px;padding-left:1px;background:linear-gradient(#fdfdfd,#e4e4e4 45%,#bdbdbd);border-top:1px solid #9a9a9a;border-bottom:1px solid #5c7080;color:#111}
span{flex:1}
b{font-weight:400;width:39px;padding-left:8px;border-left:1px solid #c8c8c8;height:20px}
em{width:19px;border-left:1px solid #c8c8c8;display:flex;align-items:flex-end;justify-content:flex-end;padding:0 2px 2px;height:22px}
`, `<span>Для вызова справки нажмите F1</span><b>1</b><b>3</b><em><ui-icon name="grip"></ui-icon></em>`);

define('cad-app', `
:host{display:block;height:100%}
.frame{--glass:linear-gradient(#8fb4d8,#c6d8e8 32px,#c2d6e8 60px,#4d5f70 72px,#4d5f70 92px,#c0d8ea 104px,#c6dcec 190px,#a2d0f2 200px,#9accf0 88%,#3c5da4 90%,#2f4c90 97%,#6f98cc);
display:grid;grid-template-rows:auto auto 1fr auto;height:100%;padding:0 8px 7px;border:solid #14203a;border-width:2px 0 1px;border-radius:7px;
background:var(--glass) left/8px 100% no-repeat,linear-gradient(#8fb4d8,#a9cbe8 24px,transparent 32px),linear-gradient(#c6e0f2 60px,#5d6e80 72px,#5d6e80 92px,#c6e0f2 104px,#b7dcf5 30%,#a9d4f0) right/8px 100% no-repeat,linear-gradient(90deg,#9cc8e4 46%,#b7e0f8 47%)}
header{display:grid;grid-template-columns:41px 1fr;grid-template-rows:30px 18px}
.app{grid-row:1/3;align-self:end;height:42px;display:grid;grid-template-columns:1fr 9px;align-items:center;justify-items:center;background:linear-gradient(#e0e0e0,#8e8e8e);border:2px solid #1c1c1c;color:#222;padding-top:2px}
.app span{font:bold 8px/10px "Open Sans",sans-serif}
main{display:grid;grid-template-columns:244px 1fr;grid-template-rows:1fr 22px;min-height:0;background:#f0f0f0}
model-browser{grid-row:1/3}
model-view{border-right:2px solid #fff}
title-strip{margin-top:-2px}
`, `
<div class="frame">
<header><button class="app" aria-label="Inventor PRO"><ui-icon name="logo"></ui-icon><ui-icon name="caret"></ui-icon><span>PRO</span></button><title-strip></title-strip><ribbon-tabs></ribbon-tabs></header>
<cad-ribbon></cad-ribbon>
<main><model-browser></model-browser><model-view></model-view><doc-tabs></doc-tabs></main>
<status-bar></status-bar>
</div>`);
</script>
</body>
</html>
